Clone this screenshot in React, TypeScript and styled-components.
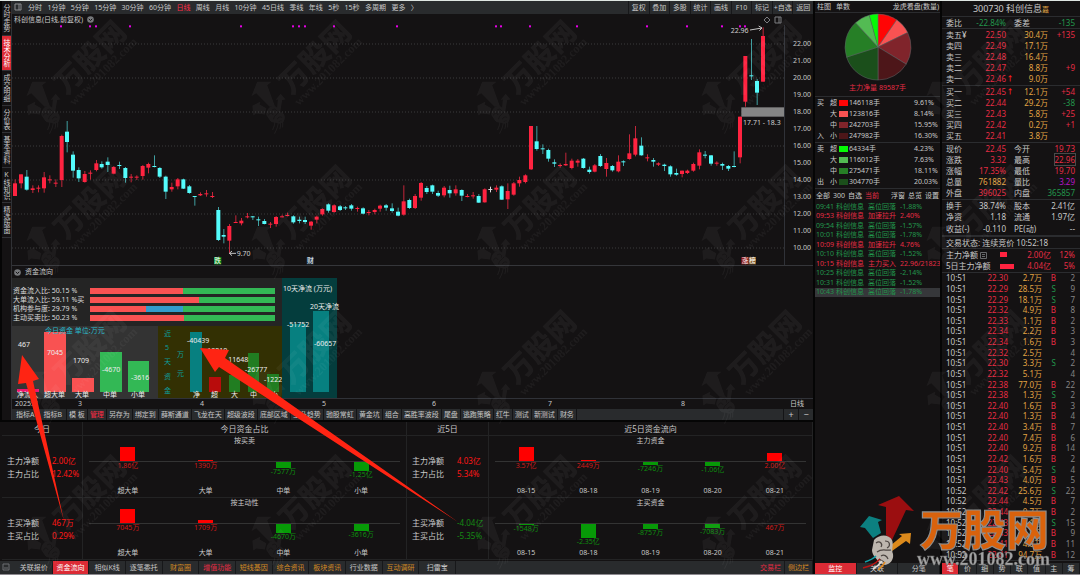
import React from 'react';
import styled, { createGlobalStyle } from 'styled-components';

const C = {
  bg: '#141213',
  bar: '#292b2d',
  line: '#2b2c2f',
  text: '#c8c8c8',
  red: '#e62c44',
  green: '#22964c',
  amber: '#e2a544',
};

const Global = createGlobalStyle`
  * { box-sizing: border-box; }
  body { margin: 0; background: ${C.bg}; }
  button { font: inherit; color: inherit; background: none; border: 0; padding: 0; margin: 0; cursor: pointer; white-space: nowrap; }
  table { border-collapse: collapse; border-spacing: 0; }
  td, th { padding: 0; font-weight: 400; text-align: left; white-space: nowrap; }
`;

/* ---------- page frame ---------- */
const Page = styled.div`
  position: relative;
  display: grid;
  grid-template-columns: minmax(0, 1fr) 127px 138px;
  min-height: 100vh;
  overflow: hidden;
  background: ${C.bg};
  color: ${C.text};
  font: 7px/8px "Noto Sans", "Noto Sans CJK SC", sans-serif;
  border-top: 1px solid #dfe6e2;
  border-bottom: 1px solid #8d8a90;
`;
const Left = styled.main`
  display: flex;
  flex-direction: column;
  border-right: 2px solid #050505;
`;
const Upper = styled.div`
  display: flex;
  border-bottom: 2px solid #050505;
`;
const Rail = styled.nav`
  width: 12px;
  display: flex;
  flex-direction: column;
  border-right: 1px solid #303135;
  border-left: 2px solid #050505;
`;
const RailButton = styled.button<{ $on?: boolean; $short?: boolean }>`
  height: ${p => (p.$short ? 27 : 35)}px;
  writing-mode: vertical-rl;
  text-orientation: upright;
  font-size: 7px;
  line-height: 9px;
  text-align: center;
  border-bottom: 1px solid #303135;
  background: ${p => (p.$on ? '#dc2b35' : 'transparent')};
  color: ${p => (p.$on ? '#fff' : C.text)};
`;
const Work = styled.section`
  flex: 1;
  min-width: 0;
`;

/* ---------- toolbar ---------- */
const Toolbar = styled.div`
  display: flex;
  align-items: stretch;
  height: 13px;
  background: ${C.bar};
`;
const PanelIcon = styled.svg`
  width: 8px;
  height: 8px;
  margin: 2px 6px 0 2px;
`;
const Periods = styled.div`
  display: flex;
  justify-content: space-between;
  width: 390px;
`;
const Period = styled.button<{ $on?: boolean }>`
  color: ${p => (p.$on ? '#ff2b45' : C.text)};
`;
const Tools = styled.div`
  display: grid;
  grid-template-columns: repeat(9, 1fr);
  width: 185px;
  margin-left: auto;
`;
const Tool = styled.button`
  border-left: 1px solid #17181a;
`;

/* ---------- price chart ---------- */
const ChartTitle = styled.div<{ $tall?: boolean }>`
  display: flex;
  align-items: center;
  gap: 4px;
  height: ${p => (p.$tall ? 12 : 11)}px;
  padding-left: 2px;
`;
const Dot = styled.svg`
  width: 7px;
  height: 7px;
`;
const PriceArea = styled.div`
  display: grid;
  grid-template-columns: minmax(0, 1fr) 28px;
  border-bottom: 1px solid #35363a;
`;
const Candles = styled.svg`
  display: block;
  width: 100%;
  border-right: 1px solid #303238;
`;
const Axis = styled.div`
  display: flex;
  flex-direction: column;
  justify-content: space-between;
  padding: 15px 2px 13px 0;
  text-align: right;
`;

/* ---------- fund indicator ---------- */
const Indicator = styled.div`
  display: flex;
  height: 120px;
`;
const IndLeft = styled.div`
  width: 270px;
`;
const Ratios = styled.div`
  height: 48px;
  padding-top: 8px;
  background: #242424;
`;
const Ratio = styled.div`
  display: flex;
  align-items: center;
  height: 9px;
  padding-left: 1px;
  color: #dcdcdc;
`;
const RatioLabel = styled.span`
  width: 77px;
  white-space: pre;
`;
const RatioBar = styled.div<{ $cols: string }>`
  display: grid;
  grid-template-columns: ${p => p.$cols};
  width: 185px;
  height: 6px;
`;
const Fill = styled.i<{ $c: string }>`
  background: ${p => p.$c};
`;
const BarDrawings = styled.svg`
  display: block;
`;
const Dates = styled.div`
  display: grid;
  grid-template-columns: 63px 122px 122px 110px 116px 133px 1fr auto;
  height: 11px;
  padding: 1px 9px 0 3px;
  border-top: 1px solid #303238;
`;
const IndicatorTabs = styled.div`
  display: flex;
  height: 11px;
  background: ${C.bar};
`;
const IndTab = styled.button<{ $wide?: boolean; $on?: boolean }>`
  padding: 0 ${p => (p.$wide ? 4 : 2)}px;
  border-right: 1px solid #141416;
  color: ${p => (p.$on ? '#ff2b45' : C.text)};
`;
const ZoomTabs = styled.div`
  display: grid;
  grid-template-columns: 15px 15px;
  margin-left: auto;
  font-size: 9px;
  & > button { border-left: 1px solid #141416; }
`;

/* ---------- fund flow table ---------- */
const Flow = styled.div`
  flex: 1;
  display: grid;
  grid-template-columns: 81px minmax(0, 1fr) 82px minmax(0, 1fr);
  grid-template-rows: 14px 62px 62px;
  margin-left: 2px;
`;
const FlowHead = styled.div`
  font-size: 8px;
  line-height: 13px;
  text-align: center;
  border-right: 1px solid #232324;
  border-bottom: 1px solid #232324;
`;
const Facts = styled.dl`
  display: grid;
  grid-template-columns: 45px 1fr;
  align-content: start;
  row-gap: 1px;
  margin: 0;
  padding: 19px 0 0 5px;
  font-size: 8px;
  line-height: 12px;
  border-right: 1px solid #232324;
  border-bottom: 1px solid #232324;
  & > dt, & > dd { margin: 0; }
`;
const FactValue = styled.dd<{ $up?: boolean }>`
  color: ${p => (p.$up ? '#ff1616' : '#148a14')};
`;
const BarPanel = styled.div`
  border-right: 1px solid #232324;
  border-bottom: 1px solid #232324;
  padding: 1px 6px 0;
`;
const BarTitle = styled.div`
  text-align: center;
`;
const Bars = styled.div`
  display: flex;
`;
const BarCol = styled.div`
  flex: 1;
  height: 50px;
  display: flex;
  flex-direction: column;
  align-items: center;
`;
const Above = styled.div`
  display: flex;
  align-items: flex-end;
  justify-content: center;
  width: 100%;
  height: 17px;
  border-bottom: 1px solid #333;
`;
const Bar = styled.i<{ $up?: boolean }>`
  display: block;
  width: 15px;
  background: ${p => (p.$up ? '#ff0000' : '#079a07')};
`;
const BarValue = styled.span<{ $up?: boolean }>`
  color: ${p => (p.$up ? '#cc1a1a' : '#0e8e0e')};
`;
const BarName = styled.span`
  margin-top: auto;
`;

/* ---------- tab strips ---------- */
const BottomTabs = styled.div`
  display: flex;
  height: 13px;
  background: ${C.bar};
`;
const TabCells = styled.div`
  display: grid;
  grid-template-columns: repeat(12, 1fr);
  width: 440px;
`;
const Tab = styled.button<{ $on?: boolean; $c?: string }>`
  border-right: 1px solid #17181a;
  background: ${p => (p.$on ? '#dc2b35' : C.bar)};
  color: ${p => (p.$on ? '#fff' : p.$c || C.text)};
`;
const EndTabs = styled.div`
  display: grid;
  grid-template-columns: 28px 28px;
  margin-left: auto;
`;
const Strip = styled.div<{ $n: number }>`
  display: grid;
  grid-template-columns: repeat(${p => p.$n}, 1fr);
  height: 11px;
  margin-top: auto;
`;

/* ---------- order split panel ---------- */
const Split = styled.section`
  display: flex;
  flex-direction: column;
  border-right: 2px solid #050505;
`;
const SplitHead = styled.div`
  display: flex;
  gap: 5px;
  height: 12px;
  padding: 0 1px 0 2px;
  border-bottom: 1px solid ${C.line};
  & > span { margin-left: auto; line-height: 12px; white-space: nowrap; }
`;
const Pie = styled.svg`
  display: block;
  width: 68px;
  height: 68px;
  margin: 0 auto;
`;
const PieCaption = styled.div`
  height: 16px;
  padding-top: 3px;
  text-align: center;
  color: ${C.red};
  border-bottom: 1px solid ${C.line};
`;
const SplitTable = styled.table`
  width: 100%;
  height: 46px;
  border-bottom: 1px solid ${C.line};
  td:nth-child(1) { width: 15px; padding-left: 2px; }
  td:nth-child(2) { width: 9px; }
  td:nth-child(3) { width: 10px; }
  td:nth-child(5) { width: 26px; }
`;
const Swatch = styled.i<{ $c: string }>`
  display: block;
  width: 9px;
  height: 6px;
  background: ${p => p.$c};
`;
const Filters = styled.div`
  display: flex;
  gap: 3px;
  height: 13px;
  padding: 0 1px;
`;
const Filter = styled.button<{ $on?: boolean; $push?: boolean }>`
  color: ${p => (p.$on ? C.red : C.text)};
  margin-left: ${p => (p.$push ? 'auto' : '0')};
`;
const Alerts = styled.table`
  width: 100%;
  height: 95px;
  table-layout: fixed;
  td:nth-child(1) { width: 21px; padding-left: 1px; }
  td:nth-child(2) { width: 32px; }
  td:nth-child(3) { width: 32px; }
  td:nth-child(4) { overflow: hidden; }
`;
const AlertRow = styled.tr<{ $up?: boolean; $on?: boolean }>`
  color: ${p => (p.$up ? C.red : C.green)};
  background: ${p => (p.$on ? '#36373a' : 'transparent')};
`;

/* ---------- quote panel ---------- */
const Quote = styled.section`
  display: flex;
  flex-direction: column;
  font-size: 8px;
  line-height: 10px;
`;
const QuoteTitle = styled.h1`
  margin: 0;
  height: 16px;
  font-size: 9px;
  line-height: 15px;
  font-weight: 400;
  text-align: center;
  border-bottom: 1px solid ${C.line};
`;
const Badge = styled.small`
  font-size: 7px;
  color: ${C.amber};
`;
const Book = styled.table<{ $h: number }>`
  width: 100%;
  height: ${p => p.$h}px;
  table-layout: fixed;
  border-bottom: 1px solid ${C.line};
  td:first-child { padding-left: 4px; }
  td:last-child { padding-right: 5px; }
`;
const Cell = styled.td<{ $c?: string; $box?: boolean }>`
  && { text-align: right; }
  color: ${p => p.$c || C.text};
`;
const Boxed = styled.span`
  outline: 1px solid #4a4a4a;
`;
const Mark = styled.td`
  color: #ff1e1e;
  text-align: center;
  font-size: 7px;
  font-weight: 700;
`;
const State = styled.div`
  height: 13px;
  padding-left: 4px;
  line-height: 12px;
  border-top: 1px solid ${C.line};
  border-bottom: 1px solid ${C.line};
`;
const FlowBar = styled.i<{ $w: number }>`
  display: block;
  width: ${p => p.$w}px;
  height: 5px;
  background: #ff2340;
`;
const NoteIcon = styled.svg`
  width: 7px;
  height: 7px;
  margin-left: 2px;
  vertical-align: -1px;
`;
const StripWrap = styled.div`
  margin-top: auto;
  font-size: 7px;
  line-height: 8px;
`;
const Overlay = styled.svg`
  position: absolute;
  left: 0;
  top: -1px;
  width: 100%;
  pointer-events: none;
`;

/* Candles: [x, body top, body bottom, wick top, wick bottom, kind], three units per pixel. */
type K = [number, number, number, number, number, string];
const candles: K[] = [
  [45,190,228,178,228,'r'],[63,163,190,163,205,'r'],[80,170,209,150,212,'c'],[98,205,210,196,219,'r'],[115,203,206,196,217,'r'],
  [132,172,205,156,218,'r'],[149,178,181,166,190,'r'],[167,188,191,178,201,'r'],[185,48,180,44,201,'r'],[201,35,66,3,97,'c'],
  [219,104,152,94,173,'c'],[236,150,175,142,186,'c'],[254,162,186,153,188,'r'],[271,158,161,151,179,'r'],[289,130,150,120,154,'r'],
  [305,132,142,124,146,'c'],[323,125,135,112,156,'c'],[341,141,161,138,163,'r'],[358,135,138,125,147,'c'],[376,144,174,141,188,'c'],
  [393,170,173,162,187,'r'],[410,170,173,166,180,'r'],[428,138,168,135,179,'r'],[445,132,143,128,160,'r'],[463,138,141,106,142,'c'],
  [479,144,170,141,174,'c'],[497,170,215,167,237,'c'],[515,201,208,188,215,'r'],[533,178,199,174,208,'r'],[550,178,206,176,207,'c'],
  [568,199,219,195,221,'c'],[584,228,231,228,257,'c'],[601,222,226,217,228,'r'],[619,220,223,210,230,'r'],[637,228,231,216,234,'r'],
  [655,270,360,261,363,'c'],[671,345,350,327,370,'c'],[688,318,362,312,400,'r'],[707,306,308,286,308,'r'],[724,302,310,294,316,'r'],
  [742,289,291,279,295,'r'],[758,289,291,288,300,'c'],[775,298,301,290,318,'c'],[793,303,312,297,313,'c'],[811,311,314,306,324,'r'],
  [828,291,312,288,320,'r'],[846,289,291,284,292,'r'],[862,285,288,278,289,'r'],[880,289,307,286,311,'c'],[898,299,303,290,310,'c'],
  [915,300,306,290,312,'c'],[933,305,317,303,329,'r'],[950,290,299,287,310,'r'],[967,267,283,265,287,'r'],[985,253,272,250,278,'c'],
  [1002,256,276,253,278,'r'],[1020,259,270,255,273,'c'],[1036,262,265,258,270,'c'],[1054,256,266,252,272,'c'],[1072,264,267,260,275,'r'],
  [1089,265,281,262,283,'c'],[1106,276,279,270,286,'r'],[1124,270,276,266,283,'r'],[1140,257,266,254,275,'r'],[1158,256,263,252,272,'c'],
  [1176,265,273,250,278,'c'],[1194,275,287,263,289,'c'],[1211,244,284,196,287,'r'],[1228,240,264,236,267,'c'],[1245,228,264,222,267,'r'],
  [1263,189,233,186,242,'r'],[1280,204,216,198,222,'c'],[1297,196,215,194,222,'c'],[1314,219,227,212,231,'c'],[1332,203,226,198,232,'r'],
  [1349,210,220,197,233,'c'],[1367,208,220,196,227,'r'],[1385,210,227,208,243,'c'],[1402,228,231,222,232,'r'],[1419,226,229,216,236,'r'],
  [1436,228,248,222,249,'c'],[1454,208,247,205,248,'r'],[1471,207,210,200,217,'w'],[1489,203,209,196,216,'r'],[1505,199,239,196,240,'c'],
  [1523,213,238,190,267,'r'],[1541,190,224,186,227,'r'],[1558,180,190,170,200,'r'],[1576,166,186,163,190,'r'],[1593,18,148,18,150,'r'],
  [1610,64,87,18,92,'c'],[1628,85,88,73,102,'c'],[1645,90,116,86,125,'c'],[1663,127,131,118,141,'c'],[1680,135,138,130,143,'r'],
  [1697,132,136,98,138,'r'],[1715,122,144,116,148,'r'],[1733,122,128,117,140,'r'],[1750,116,144,114,146,'c'],[1768,149,156,140,161,'c'],
  [1784,136,155,132,157,'r'],[1801,108,138,102,141,'c'],[1819,129,147,114,170,'r'],[1837,138,151,135,155,'c'],[1855,125,154,106,157,'r'],
  [1870,124,127,121,138,'c'],[1888,100,117,43,119,'r'],[1906,55,104,18,109,'r'],[1924,77,106,52,107,'c'],[1942,112,115,103,124,'r'],
  [1960,120,125,114,140,'c'],[1975,130,134,127,138,'r'],[1993,134,138,131,153,'c'],[2011,139,163,136,170,'c'],[2029,159,164,146,167,'c'],
  [2046,152,162,152,172,'r'],[2062,152,159,149,162,'r'],[2080,132,152,128,155,'r'],[2098,97,137,88,148,'r'],[2115,104,107,93,115,'c'],
  [2133,106,131,105,137,'c'],[2150,128,131,124,137,'r'],[2167,132,137,128,150,'c'],[2185,138,146,135,153,'c'],[2202,138,141,94,142,'c'],
  [2220,-10,112,-10,130,'r'],[2236,-192,-55,-192,-40,'r'],[2254,-134,-131,-243,-120,'c'],[2271,-117,-82,-123,-45,'c'],[2289,-252,-115,-278,-115,'r'],
];
const kColor: Record<string, string> = { r: '#ff2340', c: '#54fcfc', w: '#ddd' };
const kWick: Record<string, string> = { r: '#c2263a', c: '#3f9ea0', w: '#ddd' };
const signals = [61,90,96,130,241,293,299,305,334,397,496,501,530,577,647,687,722,740,745];

const Tag = ({ x, c, t }: { x: number; c: string; t: string }) => (
  <g>
    <rect x={x} y="771" width="22" height="22" fill={c} />
    <text x={x + 1} y="790" fontSize="20" fill="#fff">{t}</text>
  </g>
);

const PriceChart = () => (
  <Candles viewBox="36 75 2316 720" role="img" aria-label="K线">
    {[132,234,336,438,540,642,744].map(y => (
      <line key={y} x1="36" x2="2352" y1={y} y2={y} stroke="#3a3a3c" strokeWidth="3" strokeDasharray="3 6" />
    ))}
    {signals.map(x => <rect key={x} x={x * 3 - 3} y="76" width="6" height="6" fill="#e600e6" />)}
    {candles.map(([x, a, b, t, d, k]) => (
      <g key={x}>
        <rect x={x - 1} y={t + 360} width="3" height={d - t} fill={kWick[k]} />
        <rect x={x - 6} y={a + 360} width="12" height={Math.max(b - a, 3)} fill={kColor[k]} />
      </g>
    ))}
    <rect x="2224" y="322" width="128" height="28" fill="#858585" />
    <g fill="#d0d0d0" fontSize="21">
      <text x="2229" y="375">17.71 - 18.3</text>
      <text x="2192" y="98">22.96</text>
      <text x="710" y="767">9.70</text>
    </g>
    <g stroke="#c4c4c4" strokeWidth="3" fill="none">
      <path d="M2250 90L2286 84M2276 78L2286 84L2278 92" />
      <path d="M708 760H688M696 753L688 760L696 767" />
    </g>
    <Tag x={642} c="#0d8a1c" t="跌" />
    <Tag x={920} c="#24394d" t="财" />
    <Tag x={2224} c="#8e1717" t="涨" />
    <Tag x={2246} c="#8a6230" t="榜" />
  </Candles>
);

const ratios = [
  { n: '资金流入比: 50.15 %', cols: '93fr 0fr 92fr' },
  { n: '大单流入比: 59.11 %买', cols: '109fr 0fr 76fr' },
  { n: '机构参与度: 29.79 %', cols: '56fr 37fr 92fr' },
  { n: '主动买卖比: 50.23 %', cols: '94fr 0fr 91fr' },
];

/* [x, top, width, colour] of each column; all stand on the line y = 392 */
const columns: [number, number, number, string][] = [
  [44,332,22,'#f95252'],[72,378,22,'#f95252'],[100,352,22,'#33b855'],[128,361,21,'#33b855'],
  [190,332,12,'#078080'],[209,377,12,'#b80c0c'],[229,375,11,'#217d21'],[248,353,11,'#217d21'],[267,374,12,'#217d21'],
];
const columnTexts: [number, number, string][] = [
  [18,347,'467'],[47,355,'7045'],[73,363,'1709'],[102,372,'-4670'],[131,380,'-3616'],
  [187,343,'-40439'],[205,353,'-10210'],[226,362,'-11648'],[245,372,'-26777'],[264,382,'-1222'],
  [17,397,'净流入'],[44,397,'超大单'],[75,397,'大单'],[103,397,'中单'],[131,397,'小单'],
  [193,397,'净'],[211,397,'超'],[231,397,'大'],[250,397,'中'],[271,397,'小'],
];
const verticalTexts: [number, number, string][] = [
  [164,336,'近'],[165,350,'5'],[164,364,'天'],[164,379,'资'],[164,393,'金'],[177,357,'万'],[177,376,'元'],
];

const FundIndicator = () => (
  <Indicator>
    <IndLeft>
      <Ratios>
        {ratios.map(r => (
          <Ratio key={r.n}>
            <RatioLabel>{r.n}</RatioLabel>
            <RatioBar $cols={r.cols}><Fill $c="#f95252" /><Fill $c="#339bcb" /><Fill $c="#33b855" /></RatioBar>
          </Ratio>
        ))}
      </Ratios>
      <BarDrawings width="270" height="72" viewBox="12 326 270 72">
        <rect x="12" y="326" width="146" height="72" fill="#333" />
        <rect x="158" y="326" width="124" height="72" fill="#333003" />
        {columns.map(([x, y, w, c]) => <rect key={x} x={x} y={y} width={w} height={392 - y} fill={c} />)}
        <rect x="17" y="389" width="22" height="3" fill="#f0146e" />
        <text x="45" y="333" fontSize="7" fill="#27b9cc">今日资金 单位:万元</text>
        <g fontSize="7" fill="#0c9c9c">{verticalTexts.map(([x, y, t]) => <text key={t} x={x} y={y}>{t}</text>)}</g>
        <g fontSize="7" fill="#ececec">{columnTexts.map(([x, y, t]) => <text key={t + x} x={x} y={y}>{t}</text>)}</g>
      </BarDrawings>
    </IndLeft>
    <BarDrawings width="60" height="120" viewBox="282 278 60 120">
      <rect x="282" y="278" width="55" height="120" fill="#043d3d" />
      <rect x="290" y="324" width="16" height="68" fill="#078080" />
      <rect x="313" y="311" width="16" height="81" fill="#078080" />
      <g fontSize="7" fill="#ececec">
        <text x="283" y="291">10天净流 (万元)</text>
        <text x="310" y="309">20天净流</text>
        <text x="287" y="327">-51752</text>
        <text x="314" y="346">-60657</text>
      </g>
    </BarDrawings>
  </Indicator>
);

type B = [string, number, string];
const FlowChart = ({ title, data }: { title: string; data: B[] }) => (
  <BarPanel>
    <BarTitle>{title}</BarTitle>
    <Bars>
      {data.map(([v, h, n]) => {
        const up = !v.startsWith('-');
        return (
          <BarCol key={n}>
            <Above>{up && <Bar $up style={{ height: h }} />}</Above>
            {!up && <Bar style={{ height: h }} />}
            <BarValue $up={up}>{v}</BarValue>
            <BarName>{n}</BarName>
          </BarCol>
        );
      })}
    </Bars>
  </BarPanel>
);
const FactList = ({ rows, up }: { rows: [string, string][]; up?: boolean }) => (
  <Facts>
    {rows.map(([k, v]) => <React.Fragment key={k}><dt>{k}</dt><FactValue $up={up}>{v}</FactValue></React.Fragment>)}
  </Facts>
);

const slices: [number, string][] = [
  [9.61,'#ff0505'],[8.14,'#f95252'],[15.95,'#80242b'],[16.3,'#4d1619'],[20.03,'#1b4f1b'],[18.11,'#267f26'],[7.63,'#53bb53'],[4.23,'#05fb05'],
];
const PieChart = () => {
  let sum = 0;
  const pt = (v: number) => {
    const a = (v / 100) * Math.PI * 2;
    return `${(34 + 33 * Math.sin(a)).toFixed(2)} ${(34 - 33 * Math.cos(a)).toFixed(2)}`;
  };
  return (
    <Pie viewBox="0 0 68 68" role="img" aria-label="主力净量">
      {slices.map(([v, c]) => {
        const from = sum;
        sum += v;
        return <path key={c} d={`M34 34L${pt(from)}A33 33 0 0 1 ${pt(sum)}Z`} fill={c} stroke="#60686a" strokeWidth=".5" />;
      })}
    </Pie>
  );
};

type S = [string, string, string, string, string];
const buys: S[] = [
  ['买','超','#ff0505','146118手','9.61%'],['','大','#f95252','123816手','8.14%'],['','中','#80242b','242703手','15.95%'],['入','小','#4d1619','247982手','16.30%'],
];
const sells: S[] = [
  ['卖','超','#05fb05','64334手','4.23%'],['','大','#53bb53','116012手','7.63%'],['','中','#267f26','275471手','18.11%'],['出','小','#1b4f1b','304770手','20.03%'],
];
const SplitRows = ({ rows }: { rows: S[] }) => (
  <SplitTable><tbody>
    {rows.map(r => (
      <tr key={r[3]}><td>{r[0]}</td><td>{r[1]}</td><td><Swatch $c={r[2]} /></td><td>{r[3]}</td><td>{r[4]}</td></tr>
    ))}
  </tbody></SplitTable>
);
const alerts = [
  ['09:41','高位回落','-1.88%'],['09:53','加速拉升','2.40%'],['09:54','高位回落','-1.57%'],['10:01','高位回落','-1.78%'],['10:09','加速拉升','4.76%'],
  ['10:10','高位回落','-1.52%'],['10:15','主力买入','22.96/21823'],['10:25','高位回落','-2.14%'],['10:31','高位回落','-1.52%'],['10:43','高位回落','-1.78%'],
];

const asks = [['卖五¥','22.50','','30.4万','+135'],['卖四','22.49','','17.1万',''],['卖三','22.48','','16.4万',''],['卖二','22.47','','8.8万','+9'],['卖一','22.46','↑','9.0万','']];
const bids = [['买一','22.45','↑','12.1万','+54'],['买二','22.44','','29.2万','-38'],['买三','22.43','','5.8万','+25'],['买四','22.42','','0.2万','+1'],['买五','22.41','','3.8万','']];
const BookRows = ({ rows }: { rows: string[][] }) => (
  <Book $h={57}>
    <colgroup><col width="34" /><col width="30" /><col width="8" /><col width="34" /><col /></colgroup>
    <tbody>
      {rows.map(r => (
        <tr key={r[0]}>
          <td>{r[0]}</td><Cell $c={C.red}>{r[1]}</Cell><Mark>{r[2]}</Mark><Cell $c={C.amber}>{r[3]}</Cell>
          <Cell $c={r[4].startsWith('-') ? C.green : C.red}>{r[4]}</Cell>
        </tr>
      ))}
    </tbody>
  </Book>
);
const PairRows = ({ rows, h }: { rows: string[][]; h: number }) => (
  <Book $h={h}>
    <colgroup><col width="26" /><col width="38" /><col width="8" /><col width="28" /><col /></colgroup>
    <tbody>
      {rows.map(r => (
        <tr key={r[0]}>
          <td>{r[0]}</td><Cell $c={r[2]}>{r[1]}</Cell><td /><td>{r[3]}</td>
          <Cell $c={r[5]}>{r[3] === '最高' ? <Boxed>{r[4]}</Boxed> : r[4]}</Cell>
        </tr>
      ))}
    </tbody>
  </Book>
);
const ticks = `22.30 2.7 B 2|22.29 28.5 S 9|22.29 18.1 S 7|22.32 4.9 B 8|22.33 1.1 B 2|22.34 2.2 B 3|22.34 1.6 B 3|22.32 2.5 - 4|22.30 3.3 S 2|22.32 5.1 - 4|22.38 77.0 B 22|22.38 1.3 S 2|22.40 1.6 B 3|22.40 1.3 B 4|22.40 3.4 B 7|22.40 7.4 B 6|22.40 9.2 B 14|22.42 1.6 B 2|22.40 5.4 S 4|22.43 4.0 B 5|22.42 25.6 S 22|22.44 4.5 B 7|22.44 0.7 B 2|22.43 4.1 S 15|22.43 4.9 B 9|22.41 4.8 B 11|22.41 94.7 B 12`
  .split('|').map(s => s.split(' '));

/* Site logo; its origin is the bull's head. */
const Logo = ({ mono }: { mono?: boolean }) => {
  const f = (c: string) => (mono ? '#fff' : c);
  return (
    <g>
      <path d="M17 -52L-4 -43L4 -41V-13L10 -8L24 -38L32 -37Z" fill={f('#9b0e10')} />
      <path d="M-13 -32L0 -28L-4 -26L-1 -15L-9 -10L-17 -20L-22 -21Z" fill={f('#0c8080')} />
      <path d="M10 3L8 -2L20 -12L17 -14L29 -15L28 -4L24 -7Z" fill={f('#dc8a1c')} />
      <path d="M-8 -8C-3 -14 7 -14 10 -8C12 -3 9 1 11 6C12 12 8 16 3 17L-3 15C-5 10 -10 8 -10 2Z" fill={f('#bdb6ae')} />
      <g fill="none" stroke={mono ? '#333' : '#4c4541'} strokeWidth="1.2">
        <path d="M-6 -5C-2 -8 1 -4 -1 -1M3 -7C8 -7 9 -2 5 0M-5 4C0 0 4 3 9 2M-1 8C2 6 5 8 6 11M-3 11L2 14" />
      </g>
      <g fill="none" strokeWidth="1.6">
        <path d="M-2 11C-8 17 -12 18 -19 20" stroke={f('#b81414')} />
        <path d="M0 13C-3 17 -5 19 -9 21" stroke={f('#e6e0da')} />
        <path d="M-6 8C-9 11 -14 13 -17 14" stroke={f('#12a0a8')} />
        <path d="M3 14C1 18 -2 20 -4 22" stroke={f('#e28a20')} />
      </g>
      <text x="38" y="-2" fontSize="43" fontWeight="900" fontFamily="Noto Sans CJK SC" fill={f('#d9620c')} stroke={f('#8d8f90')} strokeWidth={mono ? 0 : 1.2}>万股网</text>
      <text x="35" y="17" fontSize="18" fontWeight="700" fontFamily="Liberation Serif" fill={f('#a3a3a3')} stroke={f('#6a6a6a')} strokeWidth={mono ? 0 : 0.4}>www.201082.com</text>
    </g>
  );
};

const Marks = () => (
  <Overlay viewBox="0 0 1080 575" aria-hidden="true">
    <g opacity=".045">
      {[0, 1, 2, 3].map(r => [0, 1, 2, 3, 4].map(c => (
        <g key={`${r}-${c}`} transform={`translate(${49 + c * 225} ${115 + r * 145}) rotate(-45) scale(.68)`}><Logo mono /></g>
      )))}
    </g>
    <g fill="#ff2413">
      <path d="M22 355L39 379L33 381L64 521L26 383L18 384Z" />
      <path d="M200 348L229 350L225 358L458 522L219 367L215 372Z" />
    </g>
    <g transform="translate(882 548)"><Logo /></g>
    <g fill="none" stroke="#7c7e82">
      <path d="M767 17L770 20L767 23L764 20Z" />
      <path d="M775 17H781V23H775ZM779 17V23" />
    </g>
  </Overlay>
);

const indTabs = ['指标A','指标B','模 板','管理','另存为','绑定到','薛斯通道','飞龙在天','超级波段','底部区域','主升趋势','驰股常虹','黄金坑','组合','高胜率波段','尾盘','逃跑策略','红牛','测试','新测试','财务'];
const O = '#d48a24';
const bottom: [string, string?][] = [['关联报价'],['资金流向'],['相似K线'],['逐笔委托'],['财富圈',O],['增值功能',C.red],['短线基因',O],['综合资讯',O],['板块资讯',O],['行业数据'],['互动调研',O],['扫雷宝']];

const RoundMark = () => (
  <Dot viewBox="0 0 7 7"><circle cx="3.5" cy="3.5" r="3.3" fill="#77797c" /><path d="M1.8 2.8L3.5 4.6L5.2 2.8" fill="none" stroke="#141213" /></Dot>
);

export default function App() {
  return (
    <Page>
      <Global />
      <Left>
        <Upper>
          <Rail>
            {['分时走势','技术分析','成交明细','分价表','基本资料','K线知识','精选版面'].map((t, i) => (
              <RailButton key={t} $on={i === 1} $short={i === 3}>{t}</RailButton>
            ))}
          </Rail>
          <Work>
            <Toolbar>
              <PanelIcon viewBox="0 0 8 8"><path d="M1 1H7V7H1ZM5 1V7" fill="none" stroke="#8b8d90" /></PanelIcon>
              <Periods>
                {['分时','1分钟','5分钟','15分钟','30分钟','60分钟','日线','周线','月线','10分钟','45日线','季线','年线','5秒','15秒','多周期','更多','〉'].map(t => (
                  <Period key={t} $on={t === '日线'}>{t}</Period>
                ))}
              </Periods>
              <Tools>{['复权','叠加','多股','统计','画线','F10','标记','+自选','返回'].map(t => <Tool key={t}>{t}</Tool>)}</Tools>
            </Toolbar>
            <ChartTitle>科创信息(日线,前复权) <RoundMark /></ChartTitle>
            <PriceArea>
              <PriceChart />
              <Axis>{Array.from({ length: 13 }, (_, i) => <span key={i}>{22 - i}.00</span>)}</Axis>
            </PriceArea>
            <ChartTitle $tall><RoundMark />资金流向</ChartTitle>
            <FundIndicator />
            <Dates>
              <span>2025年</span><span>3</span><span>4</span><span>5</span><span>6</span><span>7</span><span>8</span><span>日线</span>
            </Dates>
            <IndicatorTabs>
              {indTabs.map((t, i) => <IndTab key={t} $wide={i < 2} $on={t === '管理'}>{t}</IndTab>)}
              <ZoomTabs><button>+</button><button>−</button></ZoomTabs>
            </IndicatorTabs>
          </Work>
        </Upper>
        <Flow>
          <FlowHead>今日</FlowHead><FlowHead>今日资金占比</FlowHead><FlowHead>近5日</FlowHead><FlowHead>近5日资金流向</FlowHead>
          <FactList up rows={[['主力净额','2.00亿'],['主力占比','12.42%']]} />
          <FlowChart title="按买卖" data={[['1.86亿',14,'超大单'],['1390万',1,'大单'],['-7577万',6,'中单'],['-1.25亿',9,'小单']]} />
          <FactList up rows={[['主力净额','4.03亿'],['主力占比','5.34%']]} />
          <FlowChart title="主力资金" data={[['3.57亿',14,'08-15'],['2449万',1,'08-18'],['-7246万',3,'08-19'],['-1.06亿',4,'08-20'],['2.00亿',8,'08-21']]} />
          <FactList up rows={[['主买净额','467万'],['主买占比','0.29%']]} />
          <FlowChart title="按主动性" data={[['7045万',14,'超大单'],['1709万',3,'大单'],['-4670万',9,'中单'],['-3616万',7,'小单']]} />
          <FactList rows={[['主买净额','-4.04亿'],['主买占比','-5.35%']]} />
          <FlowChart title="主买资金" data={[['-1548万',1,'08-15'],['-2.35亿',14,'08-18'],['-8757万',5,'08-19'],['-7083万',4,'08-20'],['467万',0,'08-21']]} />
        </Flow>
        <BottomTabs>
          <PanelIcon viewBox="0 0 8 8"><path d="M1 1H7V7H1ZM2 5H6" fill="none" stroke="#6d6f72" /></PanelIcon>
          <TabCells>{bottom.map(([t, c], i) => <Tab key={t} $on={i === 1} $c={c}>{t}</Tab>)}</TabCells>
          <EndTabs><Tab $c={C.red}>交易栏</Tab><Tab $c={O}>侧边栏</Tab></EndTabs>
        </BottomTabs>
      </Left>

      <Split>
        <SplitHead><button>柱图</button><button>单数</button><span>龙虎看盘(数量)</span></SplitHead>
        <PieChart />
        <PieCaption>主力净量 89587手</PieCaption>
        <SplitRows rows={buys} />
        <SplitRows rows={sells} />
        <Filters>
          <Filter>全部</Filter><Filter>300</Filter><Filter>自选</Filter><Filter $on>当前</Filter>
          <Filter $push>浮窗</Filter><Filter>总览</Filter><Filter>设置</Filter>
        </Filters>
        <Alerts><tbody>
          {alerts.map(([t, n, v], i) => (
            <AlertRow key={t} $up={!v.startsWith('-')} $on={i === 9}><td>{t}</td><td>科创信息</td><td>{n}</td><td>{v}</td></AlertRow>
          ))}
        </tbody></Alerts>
        <Strip $n={3}><Tab $on>监控</Tab><Tab>关联</Tab><Tab>分笔</Tab></Strip>
      </Split>

      <Quote>
        <QuoteTitle>300730 科创信息<Badge>嘉</Badge></QuoteTitle>
        <PairRows h={12} rows={[['委比','-22.84%',C.green,'委差','-135',C.green]]} />
        <BookRows rows={asks} />
        <BookRows rows={bids} />
        <PairRows h={57} rows={[
          ['现价','22.45',C.red,'今开','19.73',C.red],['涨跌','3.32',C.red,'最高','22.96',C.red],['涨幅','17.35%',C.red,'最低','19.70',C.red],
          ['总量','761882',C.amber,'量比','3.29','#b414c8'],['外盘','396025',C.red,'内盘','365857',C.green],
        ]} />
        <PairRows h={36} rows={[['换手','38.74%','','股本','2.41亿',''],['净资','1.18','','流通','1.97亿',''],['收益(-)','-0.110','','PE(动)','--','']]} />
        <State>交易状态: 连续竞价 10:52:18</State>
        <Book $h={24}>
          <colgroup><col width="58" /><col width="16" /><col width="35" /><col /></colgroup>
          <tbody>
            <tr>
              <td>主力净额<NoteIcon viewBox="0 0 7 7"><path d="M.5.5H6.5V6.5H.5ZM2 2.5H5M2 4.5H5" fill="none" stroke="#66686b" /></NoteIcon></td>
              <td><FlowBar $w={7} /></td><Cell $c={C.red}>2.00亿</Cell><Cell $c={C.red}>12%</Cell>
            </tr>
            <tr><td>5日主力净额</td><td><FlowBar $w={14} /></td><Cell $c={C.red}>4.04亿</Cell><Cell $c={C.red}>5%</Cell></tr>
          </tbody>
        </Book>
        <Book $h={288}>
          <colgroup><col width="34" /><col width="32" /><col width="34" /><col width="14" /><col /></colgroup>
          <tbody>
            {ticks.map(([p, v, s, n], i) => (
              <tr key={i}>
                <td>{i < 20 ? '10:51' : '10:52'}</td><Cell $c={C.red}>{p}</Cell><Cell $c={C.amber}>{v}万</Cell>
                <Cell $c={s === 'B' ? C.red : C.green}>{s === '-' ? '' : s}</Cell><Cell $c="#848484">{n}</Cell>
              </tr>
            ))}
          </tbody>
        </Book>
        <StripWrap>
          <Strip $n={8}>{['笔','价','细','势','联','值','主','筹'].map((t, i) => <Tab key={t} $on={i === 0}>{t}</Tab>)}</Strip>
        </StripWrap>
      </Quote>
      <Marks />
    </Page>
  );
}
